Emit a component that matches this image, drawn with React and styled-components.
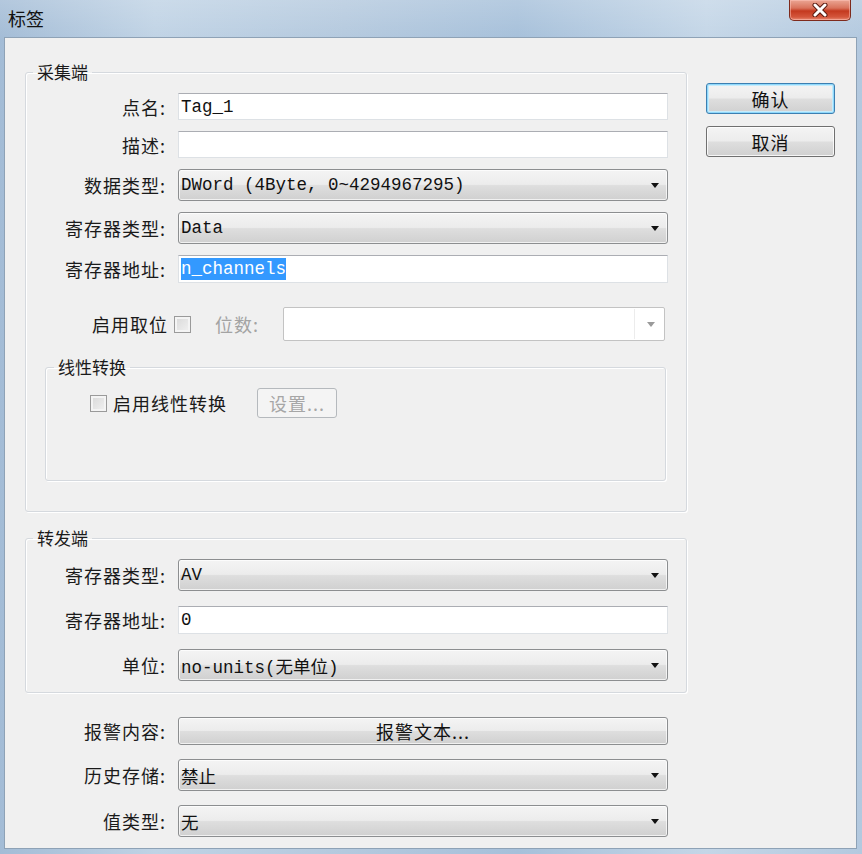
import React from 'react';
import styled, { createGlobalStyle } from 'styled-components';

const GlobalStyle = createGlobalStyle`
  html, body { margin: 0; padding: 0; }
  body {
    width: 862px;
    height: 854px;
    overflow: hidden;
    font-family: "Noto Sans CJK SC", "Noto Sans", sans-serif;
  }
`;

const Window = styled.div`
  width: 862px;
  height: 854px;
  box-sizing: border-box;
  display: flex;
  flex-direction: column;
  padding: 0 5px 5px 4px;
  background:
    linear-gradient(180deg, rgba(255,255,255,0.18) 0%, rgba(255,255,255,0) 40px),
    linear-gradient(90deg, #a3bcd6 0%, #c0d3e5 18%, #b4c9de 40%, #a6c0da 60%, #c4d6e7 82%, #b3c9df 100%);
`;

const TitleBar = styled.div`
  height: 37px;
  display: flex;
  align-items: flex-start;
  justify-content: space-between;
`;

const Title = styled.div`
  margin: 6px 0 0 4px;
  font-size: 18px;
  line-height: 24px;
  color: #111;
`;

const CloseBtn = styled.div`
  width: 62px;
  height: 21px;
  margin-right: 6px;
  box-sizing: border-box;
  border: 1px solid #7e2a1c;
  border-top: none;
  border-radius: 0 0 5px 5px;
  background: linear-gradient(#eba694 0%, #d9735c 40%, #c4391f 55%, #d4563c 85%, #e88a73 100%);
  display: flex;
  align-items: center;
  justify-content: center;
  box-shadow: inset 0 0 0 1px rgba(255, 200, 190, 0.5);
`;

const Client = styled.div`
  flex: 1;
  display: flex;
  align-items: flex-start;
  box-sizing: border-box;
  border: 1px solid #8ea2b6;
  background: #f0f0f0;
  padding: 22px 21px 0 20px;
`;

const Form = styled.div`
  width: 662px;
  display: flex;
  flex-direction: column;
`;

const Group = styled.fieldset`
  margin: ${p => p.$mt || 0}px 0 0 0;
  padding: 9px 18px ${p => p.$pb}px 0;
  min-width: 0;
  border: 1px solid #d5d9de;
  border-radius: 3px;
  box-shadow: inset 1px 1px 0 #ffffff, 1px 1px 0 #ffffff;
`;

const SubGroup = styled.fieldset`
  margin: 14px 2px 0 19px;
  padding: 9px 0 62px 0;
  min-width: 0;
  border: 1px solid #d5d9de;
  border-radius: 3px;
  box-shadow: inset 1px 1px 0 #ffffff, 1px 1px 0 #ffffff;
`;

const Legend = styled.legend`
  margin-left: ${p => p.$ml || 7}px;
  padding: 0 4px;
  font-size: 17px;
  line-height: 24px;
  color: #1a1a1a;
`;

const FieldGrid = styled.div`
  display: grid;
  grid-template-columns: 144px 490px;
  column-gap: 8px;
  row-gap: ${p => p.$gap}px;
  align-items: center;
`;

const Plain = styled.div`
  margin-top: 24px;
  padding: 0 19px 0 1px;
`;

const Label = styled.div`
  text-align: right;
  padding-right: 4px;
  font-size: 18px;
  letter-spacing: 1px;
  line-height: 24px;
  color: #1a1a1a;
  white-space: nowrap;
`;

const TextBox = styled.div`
  height: ${p => p.$h || 27}px;
  box-sizing: border-box;
  background: #fff;
  border: 1px solid #dde1e5;
  border-top-color: #abadb3;
  padding: 0 2px;
  display: flex;
  align-items: center;
  font-family: "Liberation Mono", "Noto Sans CJK SC", monospace;
  font-size: 17.5px;
  color: #111;
  white-space: pre;
`;

const Selected = styled.span`
  background: #3399ff;
  color: #fff;
  line-height: 22px;
`;

const Combo = styled.div`
  position: relative;
  height: 32px;
  box-sizing: border-box;
  border: 1px solid #8c8e90;
  border-radius: 3px;
  background: linear-gradient(#f4f4f4 0%, #ececec 48%, #dedede 52%, #d0d0d0 100%);
  box-shadow: inset 0 0 0 1px rgba(255, 255, 255, 0.7);
  padding: 0 24px 0 2px;
  display: flex;
  align-items: center;
  font-family: "Liberation Mono", "Noto Sans CJK SC", monospace;
  font-size: 17.5px;
  color: #111;
  white-space: pre;
`;

const Arrow = styled.span`
  position: absolute;
  right: 8px;
  top: 50%;
  margin-top: -2px;
  width: 0;
  height: 0;
  border-left: 4px solid transparent;
  border-right: 4px solid transparent;
  border-top: 5px solid ${p => p.$dim ? '#9a9a9a' : '#111'};
`;

const PushButton = styled.div`
  height: 28px;
  box-sizing: border-box;
  border: 1px solid #8c8e90;
  border-radius: 3px;
  background: linear-gradient(#f4f4f4 0%, #ececec 48%, #dedede 52%, #d0d0d0 100%);
  box-shadow: inset 0 0 0 1px rgba(255, 255, 255, 0.7);
  display: flex;
  align-items: center;
  justify-content: center;
  font-size: 18px;
  letter-spacing: 1px;
  color: #111;
`;

const BitRow = styled.div`
  margin-top: 24px;
  display: flex;
  align-items: center;
  padding-left: 66px;
  height: 34px;
`;

const Text = styled.span`
  font-size: 18px;
  letter-spacing: 1px;
  line-height: 24px;
  color: ${p => p.$dim ? '#a3a3a3' : '#1a1a1a'};
  margin-left: ${p => p.$ml || 0}px;
  white-space: nowrap;
`;

const Check = styled.span`
  display: inline-block;
  width: 17px;
  height: 17px;
  box-sizing: border-box;
  border: 1px solid #9a9a9a;
  background: linear-gradient(135deg, #d8d8d8, #f2f2f2);
  box-shadow: inset 0 0 0 2px #f4f4f4;
  margin-left: ${p => p.$ml || 0}px;
  flex-shrink: 0;
`;

const DimCombo = styled.div`
  position: relative;
  flex: 1;
  height: 34px;
  margin: 0 3px 0 24px;
  box-sizing: border-box;
  background: #fff;
  border: 1px solid #c3c3c3;
  border-radius: 2px;
`;

const DimDrop = styled.div`
  position: absolute;
  top: 1px;
  right: 1px;
  bottom: 1px;
  width: 28px;
  border-left: 1px solid #ececec;
`;

const LinearRow = styled.div`
  display: flex;
  align-items: center;
  height: 30px;
  padding-left: 44px;
`;

const SmallButton = styled.div`
  width: 80px;
  height: 30px;
  margin-left: 30px;
  box-sizing: border-box;
  border: 1px solid #b5b9bd;
  border-radius: 3px;
  background: #f4f4f4;
  display: flex;
  align-items: center;
  justify-content: center;
  font-size: 18px;
  letter-spacing: 1px;
  color: #a6a6a6;
`;

const Side = styled.div`
  margin: 23px 0 0 19px;
  width: 129px;
  display: flex;
  flex-direction: column;
  gap: 12px;
`;

const DialogButton = styled(PushButton)`
  height: 31px;
  border-color: ${p => p.$default ? '#3c7fb1' : '#707070'};
  box-shadow: ${p => p.$default
    ? 'inset 0 0 0 1px #8fd8fb, inset 0 0 0 2px #c6ecfc'
    : 'inset 0 0 0 1px rgba(255,255,255,0.8)'};
`;

function Field({ label, children }) {
  return (
    <>
      <Label>{label}</Label>
      {children}
    </>
  );
}

function Select({ value }) {
  return (
    <Combo>
      {value}
      <Arrow />
    </Combo>
  );
}

export default function App() {
  return (
    <>
      <GlobalStyle />
      <Window>
        <TitleBar>
          <Title>标签</Title>
          <CloseBtn>
            <svg width="16" height="14" viewBox="0 0 16 14">
              <path d="M3 2 L13 12 M13 2 L3 12" stroke="#5a1a10" strokeWidth="5" strokeLinecap="round" />
              <path d="M3 2 L13 12 M13 2 L3 12" stroke="#ffffff" strokeWidth="3" strokeLinecap="round" />
            </svg>
          </CloseBtn>
        </TitleBar>
        <Client>
          <Form>
            <Group $pb={30}>
              <Legend>采集端</Legend>
              <FieldGrid $gap={11}>
                <Field label="点名:"><TextBox>Tag_1</TextBox></Field>
                <Field label="描述:"><TextBox /></Field>
                <Field label="数据类型:"><Select value="DWord (4Byte, 0~4294967295)" /></Field>
                <Field label="寄存器类型:"><Select value="Data" /></Field>
                <Field label="寄存器地址:">
                  <TextBox $h={28}><Selected>n_channels</Selected></TextBox>
                </Field>
              </FieldGrid>
              <BitRow>
                <Text>启用取位</Text>
                <Check $ml={6} />
                <Text $dim $ml={24}>位数:</Text>
                <DimCombo>
                  <DimDrop><Arrow $dim /></DimDrop>
                </DimCombo>
              </BitRow>
              <SubGroup>
                <Legend $ml={8}>线性转换</Legend>
                <LinearRow>
                  <Check />
                  <Text $ml={6}>启用线性转换</Text>
                  <SmallButton>设置...</SmallButton>
                </LinearRow>
              </SubGroup>
            </Group>
            <Group $mt={14} $pb={11}>
              <Legend>转发端</Legend>
              <FieldGrid $gap={15}>
                <Field label="寄存器类型:"><Select value="AV" /></Field>
                <Field label="寄存器地址:"><TextBox $h={28}>0</TextBox></Field>
                <Field label="单位:"><Select value="no-units(无单位)" /></Field>
              </FieldGrid>
            </Group>
            <Plain>
              <FieldGrid $gap={14}>
                <Field label="报警内容:"><PushButton>报警文本...</PushButton></Field>
                <Field label="历史存储:"><Select value="禁止" /></Field>
                <Field label="值类型:"><Select value="无" /></Field>
              </FieldGrid>
            </Plain>
          </Form>
          <Side>
            <DialogButton $default>确认</DialogButton>
            <DialogButton>取消</DialogButton>
          </Side>
        </Client>
      </Window>
    </>
  );
}
